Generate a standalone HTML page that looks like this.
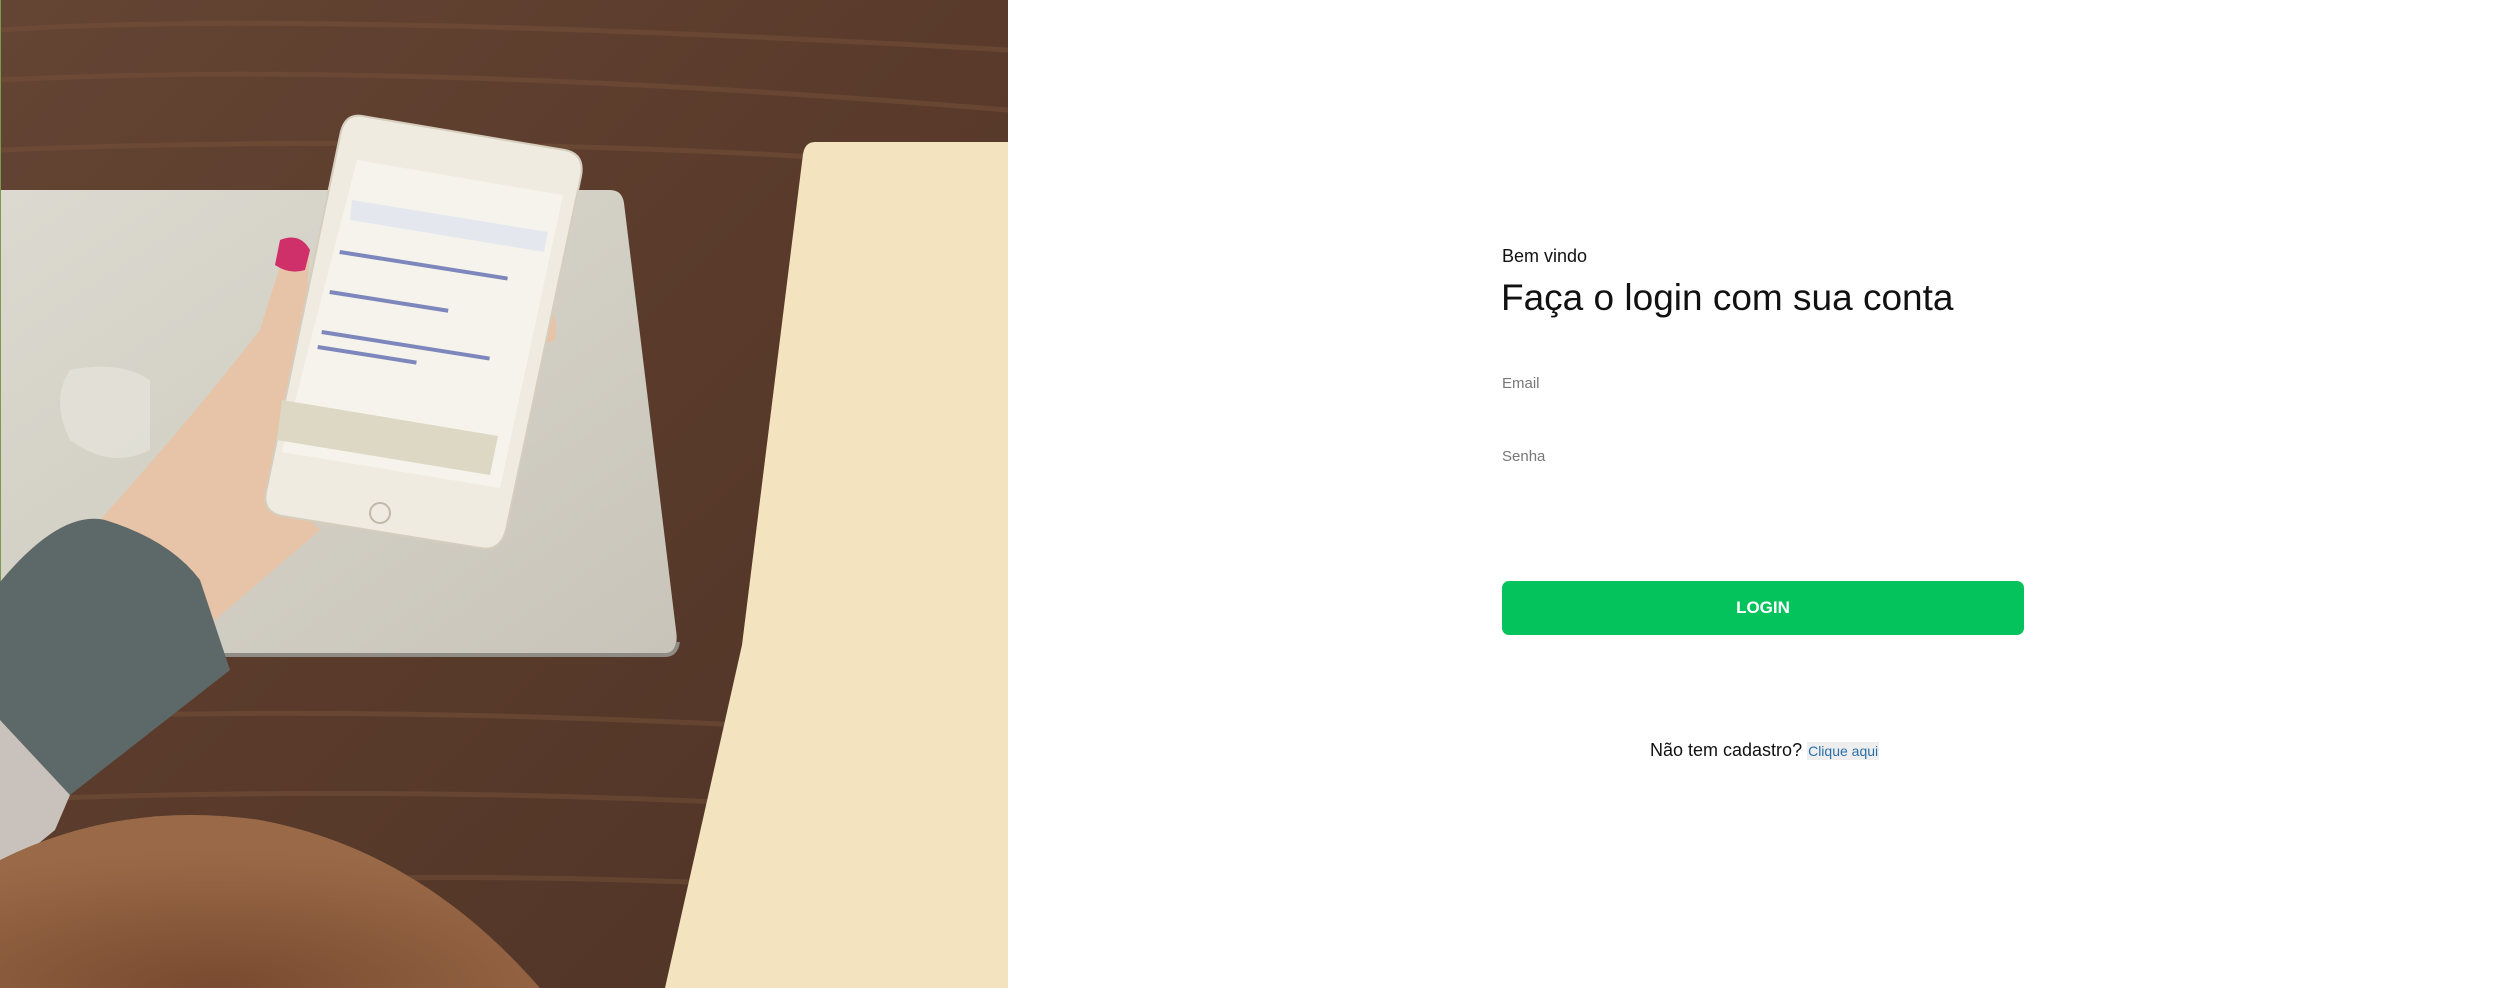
<!DOCTYPE html>
<html><head><meta charset="utf-8"><style>
html,body{margin:0;padding:0;width:2502px;height:988px;overflow:hidden;background:#fff;font-family:"Liberation Sans",Arial,sans-serif;}
.left{position:absolute;left:0;top:0;width:1008px;height:988px;}
.t{position:absolute;white-space:nowrap;}
</style></head><body>
<svg class="left" width="1008" height="988" viewBox="0 0 1008 988">
<defs>
<linearGradient id="wood" x1="0" y1="0" x2="1" y2="1">
<stop offset="0" stop-color="#644433"/><stop offset="0.5" stop-color="#5a3b2b"/><stop offset="1" stop-color="#4e3326"/>
</linearGradient>
<linearGradient id="lap" x1="0" y1="0" x2="1" y2="1">
<stop offset="0" stop-color="#dcdad0"/><stop offset="1" stop-color="#c8c4b9"/>
</linearGradient>
<radialGradient id="hair" cx="0.4" cy="1" r="0.8">
<stop offset="0" stop-color="#7a4a30"/><stop offset="1" stop-color="#9a6a48"/>
</radialGradient>
</defs>
<rect width="1008" height="988" fill="url(#wood)"/>
<g stroke="#75513a" stroke-width="5" opacity="0.5" fill="none">
<path d="M0 30 Q300 10 1008 50"/><path d="M0 80 Q400 60 1008 110"/><path d="M0 150 Q500 130 1008 170"/>
<path d="M0 720 Q400 700 1008 740"/><path d="M0 800 Q500 780 1008 820"/><path d="M300 880 Q600 870 1008 900"/>
</g>
<path d="M0 190 L610 190 Q622 190 624 203 L676 630 Q680 655 660 655 L210 655 L0 600 Z" fill="url(#lap)"/>
<path d="M215 655 L665 655 Q676 655 678 642" stroke="#8f8c86" stroke-width="4" fill="none"/>
<path d="M70 370 Q120 360 150 380 L150 450 Q110 470 70 440 Q50 400 70 370Z" fill="#e6e4dc" opacity="0.7"/>
<path d="M815 142 L1008 142 L1008 988 L665 988 L742 645 L803 154 Q805 142 815 142Z" fill="#f3e4bf"/>
<path d="M0 0 L0 988" stroke="#7a9a50" stroke-width="2"/>
<path d="M100 520 Q190 420 260 330 L285 250 Q300 235 310 250 L292 500 L320 530 L215 620 L180 580 Z" fill="#e7c4a8"/>
<path d="M540 300 Q560 310 555 340 L540 345 Z" fill="#e7c4a8"/>
<path d="M280 240 Q300 232 310 250 L305 270 Q290 275 275 265 Z" fill="#d0306a"/>
<path d="M362 116 L565 150 Q585 154 581 176 L506 530 Q500 552 480 548 L282 516 Q262 512 266 492 L340 136 Q344 113 362 116Z" fill="#f0ebe0" stroke="#d5cdbd" stroke-width="2"/>
<path d="M357 160 L563 195 L500 488 L282 452 Z" fill="#f6f3ec"/>
<path d="M352 200 L548 232 L544 252 L350 220Z" fill="#e4e8ee"/>
<path d="M282 400 L498 436 L490 475 L277 440Z" fill="#dcd8c4"/>
<g fill="#4a5aa8" opacity="0.7">
<rect x="340" y="250" width="170" height="4" transform="rotate(9 340 250)"/>
<rect x="330" y="290" width="120" height="4" transform="rotate(9 330 290)"/>
<rect x="322" y="330" width="170" height="4" transform="rotate(9 322 330)"/>
<rect x="318" y="345" width="100" height="4" transform="rotate(9 318 345)"/>
</g>
<circle cx="380" cy="513" r="10" fill="none" stroke="#c0b8a8" stroke-width="2"/>
<path d="M0 582 Q60 510 105 520 Q170 540 200 580 L230 670 L70 795 L0 720Z" fill="#5d6868"/>
<path d="M0 720 L70 795 L55 830 L0 875Z" fill="#c9c2bc"/>
<path d="M0 860 Q120 800 260 820 Q420 850 540 988 L0 988Z" fill="url(#hair)"/>
</svg>
<div class="t" style="left:1502px;top:246px;font-size:18px;color:#111;">Bem vindo</div>
<div class="t" style="left:1501px;top:277px;font-size:37px;color:#111;">Faça o login com sua conta</div>
<div class="t" style="left:1502px;top:375px;font-size:15px;color:#777;">Email</div>
<div class="t" style="left:1502px;top:448px;font-size:15px;color:#777;">Senha</div>
<div style="position:absolute;left:1502px;top:581px;width:522px;height:54px;background:#05c35c;border-radius:7px;color:#fff;font-weight:bold;font-size:17px;text-align:center;line-height:54px;">LOGIN</div>
<div class="t" style="left:1650px;top:740px;font-size:18px;color:#111;">Não tem cadastro? <span style="background:#eeeeee;color:#2a6fa8;font-size:14px;padding:1px 1px;">Clique aqui</span></div>
</body></html>
